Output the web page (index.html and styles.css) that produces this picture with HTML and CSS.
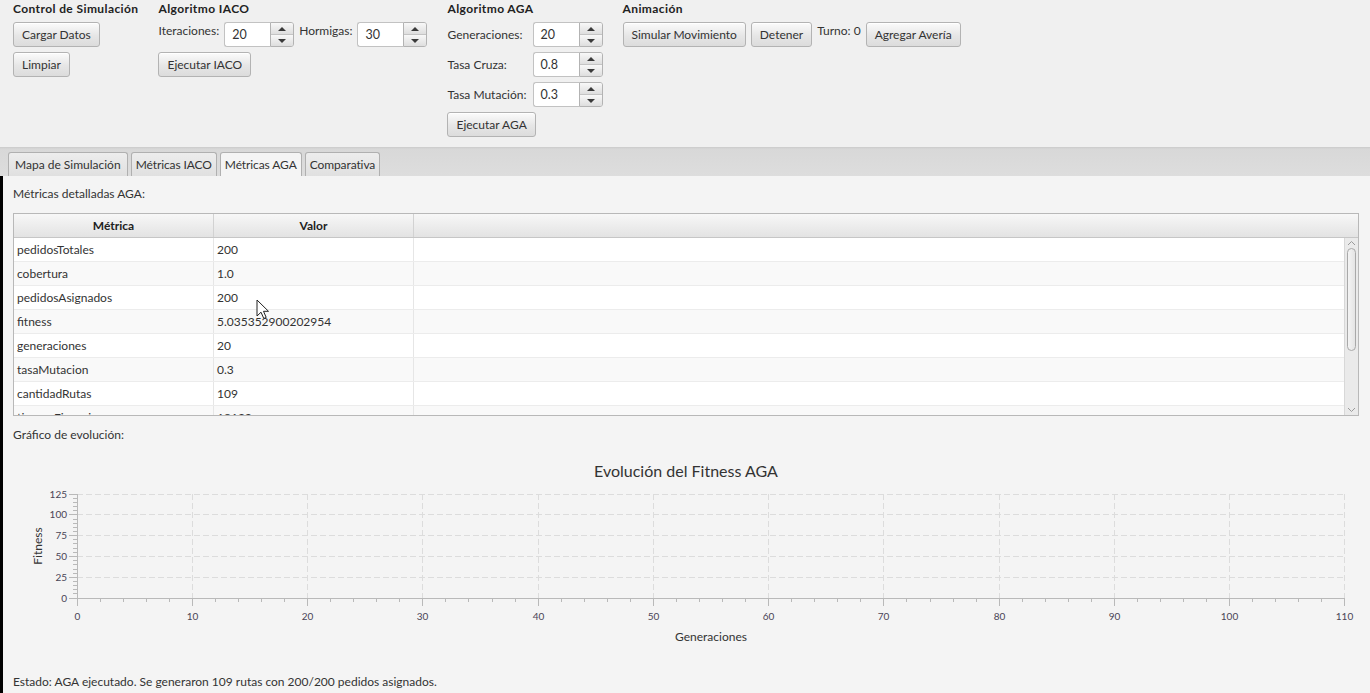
FILE: index.html
```html
<!DOCTYPE html>
<html lang="es">
<head>
<meta charset="utf-8">
<title>Simulación</title>
<link rel="stylesheet" href="styles.css">
</head>
<body>
<div class="app">
  <header class="toolbar">
    <section class="group">
      <div class="group-title">Control de Simulación</div>
      <button class="btn">Cargar Datos</button>
      <button class="btn">Limpiar</button>
    </section>
    <section class="group">
      <div class="group-title">Algoritmo IACO</div>
      <div class="param-row">
        <span class="lbl">Iteraciones:</span>
        <div class="spinner"><span class="spin-value">20</span><span class="spin-btns"><span class="spin-btn"><i class="tri-up"></i></span><span class="spin-btn"><i class="tri-down"></i></span></span></div>
        <span class="lbl">Hormigas:</span>
        <div class="spinner"><span class="spin-value">30</span><span class="spin-btns"><span class="spin-btn"><i class="tri-up"></i></span><span class="spin-btn"><i class="tri-down"></i></span></span></div>
      </div>
      <button class="btn">Ejecutar IACO</button>
    </section>
    <section class="group">
      <div class="group-title">Algoritmo AGA</div>
      <div class="param-grid">
        <span class="lbl">Generaciones:</span>
        <div class="spinner"><span class="spin-value">20</span><span class="spin-btns"><span class="spin-btn"><i class="tri-up"></i></span><span class="spin-btn"><i class="tri-down"></i></span></span></div>
        <span class="lbl">Tasa Cruza:</span>
        <div class="spinner"><span class="spin-value">0.8</span><span class="spin-btns"><span class="spin-btn"><i class="tri-up"></i></span><span class="spin-btn"><i class="tri-down"></i></span></span></div>
        <span class="lbl">Tasa Mutación:</span>
        <div class="spinner"><span class="spin-value">0.3</span><span class="spin-btns"><span class="spin-btn"><i class="tri-up"></i></span><span class="spin-btn"><i class="tri-down"></i></span></span></div>
      </div>
      <button class="btn">Ejecutar AGA</button>
    </section>
    <section class="group">
      <div class="group-title">Animación</div>
      <div class="param-row">
        <button class="btn">Simular Movimiento</button>
        <button class="btn">Detener</button>
        <span class="lbl">Turno: 0</span>
        <button class="btn">Agregar Avería</button>
      </div>
    </section>
  </header>

  <nav class="tabs">
    <div class="tab">Mapa de Simulación</div>
    <div class="tab tab-narrow">Métricas IACO</div>
    <div class="tab tab-active tab-narrow">Métricas AGA</div>
    <div class="tab tab-narrow">Comparativa</div>
  </nav>

  <div class="window-body">
    <main class="content">
      <div class="section-label">Métricas detalladas AGA:</div>
      <div class="table">
        <div class="thead">
          <div class="th col">Métrica</div>
          <div class="th col">Valor</div>
          <div class="th col-fill"></div>
        </div>
        <div class="tbody">
          <div class="rows">
            <div class="tr"><div class="td col">pedidosTotales</div><div class="td col">200</div><div class="td col-fill"></div></div>
            <div class="tr"><div class="td col">cobertura</div><div class="td col">1.0</div><div class="td col-fill"></div></div>
            <div class="tr"><div class="td col">pedidosAsignados</div><div class="td col">200</div><div class="td col-fill"></div></div>
            <div class="tr"><div class="td col">fitness</div><div class="td col">5.035352900202954</div><div class="td col-fill"></div></div>
            <div class="tr"><div class="td col">generaciones</div><div class="td col">20</div><div class="td col-fill"></div></div>
            <div class="tr"><div class="td col">tasaMutacion</div><div class="td col">0.3</div><div class="td col-fill"></div></div>
            <div class="tr"><div class="td col">cantidadRutas</div><div class="td col">109</div><div class="td col-fill"></div></div>
            <div class="tr"><div class="td col">tiempoEjecucion</div><div class="td col">18133</div><div class="td col-fill"></div></div>
          </div>
          <div class="vscroll">
            <svg class="arrow" width="13" height="10" viewBox="0 0 13 10"><polyline points="3,7 6.5,3.5 10,7" fill="none" stroke="#9a9a9a" stroke-width="1"/></svg>
            <div class="track"><div class="thumb"></div></div>
            <svg class="arrow" width="13" height="10" viewBox="0 0 13 10"><polyline points="3,3 6.5,6.5 10,3" fill="none" stroke="#9a9a9a" stroke-width="1"/></svg>
          </div>
        </div>
      </div>
      <div class="section-label chart-label">Gráfico de evolución:</div>
      <div class="chart">
        <div class="chart-title">Evolución del Fitness AGA</div>
        <svg class="plot" width="1346" height="170" viewBox="0 0 1346 170">
          <g stroke="#dcdcdc" stroke-width="1" stroke-dasharray="6 3" fill="none">
            <path d="M64 12.5H1332M64 32.5H1332M64 53.5H1332M64 74.5H1332M64 95.5H1332"/>
            <path d="M179.5 12V116M294.5 12V116M409.5 12V116M525.5 12V116M640.5 12V116M755.5 12V116M870.5 12V116M986.5 12V116M1101.5 12V116M1216.5 12V116M1331.5 12V116"/>
          </g>
          <g stroke="#b9b9b9" stroke-width="1" fill="none">
            <path d="M64.5 12V116.5M64 116.5H1332"/>
            <path d="M56 12.5H64M56 32.5H64M56 53.5H64M56 74.5H64M56 95.5H64M56 116.5H64"/>
            <path d="M60 111.5H64M60 107.5H64M60 103.5H64M60 99.5H64M60 91.5H64M60 87.5H64M60 82.5H64M60 78.5H64M60 70.5H64M60 66.5H64M60 61.5H64M60 57.5H64M60 49.5H64M60 45.5H64M60 41.5H64M60 37.5H64M60 28.5H64M60 24.5H64M60 20.5H64M60 16.5H64"/>
            <path d="M64.5 116V124M179.5 116V124M294.5 116V124M409.5 116V124M525.5 116V124M640.5 116V124M755.5 116V124M870.5 116V124M986.5 116V124M1101.5 116V124M1216.5 116V124M1331.5 116V124"/>
            <path d="M87.5 116v4M110.5 116v4M133.5 116v4M156.5 116v4M202.5 116v4M225.5 116v4M248.5 116v4M271.5 116v4M317.5 116v4M340.5 116v4M363.5 116v4M386.5 116v4M432.5 116v4M455.5 116v4M479.5 116v4M502.5 116v4M548.5 116v4M571.5 116v4M594.5 116v4M617.5 116v4M663.5 116v4M686.5 116v4M709.5 116v4M732.5 116v4M778.5 116v4M801.5 116v4M824.5 116v4M847.5 116v4M893.5 116v4M917.5 116v4M940.5 116v4M963.5 116v4M1009.5 116v4M1032.5 116v4M1055.5 116v4M1078.5 116v4M1124.5 116v4M1147.5 116v4M1170.5 116v4M1193.5 116v4M1239.5 116v4M1262.5 116v4M1285.5 116v4M1308.5 116v4"/>
          </g>
          <g class="tick-label" text-anchor="end">
            <text x="54" y="16">125</text>
            <text x="54" y="36">100</text>
            <text x="54" y="57">75</text>
            <text x="54" y="78">50</text>
            <text x="54" y="99">25</text>
            <text x="54" y="120">0</text>
          </g>
          <g class="tick-label" text-anchor="middle">
            <text x="64.5" y="138">0</text>
            <text x="179.5" y="138">10</text>
            <text x="294.5" y="138">20</text>
            <text x="409.5" y="138">30</text>
            <text x="525.5" y="138">40</text>
            <text x="640.5" y="138">50</text>
            <text x="755.5" y="138">60</text>
            <text x="870.5" y="138">70</text>
            <text x="986.5" y="138">80</text>
            <text x="1101.5" y="138">90</text>
            <text x="1216.5" y="138">100</text>
            <text x="1331.5" y="138">110</text>
          </g>
          <text class="axis-label" x="698" y="159" text-anchor="middle">Generaciones</text>
          <text class="axis-label" transform="translate(29 64) rotate(-90)" text-anchor="middle">Fitness</text>
        </svg>
      </div>
    </main>
    <footer class="status">Estado: AGA ejecutado. Se generaron 109 rutas con 200/200 pedidos asignados.</footer>
  </div>

  <svg class="cursor" width="14" height="22" viewBox="0 0 14 22">
    <path d="M1 1 L1 17 L5 13.2 L7.8 19.5 L10.2 18.4 L7.5 12.3 L12.5 12.3 Z" fill="#fff" stroke="#222" stroke-width="1" stroke-linejoin="round"/>
  </svg>
</div>
</body>
</html>
```

FILE: styles.css
```css
* { box-sizing: border-box; }

body {
  margin: 0;
  font-family: "Lato", "Liberation Sans", sans-serif;
  font-size: 12px;
  color: #333;
  background: #f4f4f4;
}

.app {
  position: relative;
  width: 1370px;
  height: 693px;
  display: flex;
  flex-direction: column;
  overflow: hidden;
  background: #f4f4f4;
}

/* ---------- toolbar ---------- */
.toolbar {
  height: 147px;
  flex: none;
  display: flex;
  gap: 20px;
  padding: 1px 10px 0 13px;
  background: #f0f0f0;
}

.group {
  display: flex;
  flex-direction: column;
  align-items: flex-start;
  gap: 5px;
}

.group-title {
  font-weight: bold;
  line-height: 16px;
  letter-spacing: 0.4px;
  color: #222;
}

.btn {
  font: inherit;
  color: #333;
  height: 25px;
  line-height: 15px;
  padding: 4px 8px;
  border: 1px solid #b3b3b3;
  border-radius: 3px;
  background: linear-gradient(to bottom, #fbfbfb 0%, #e6e6e6 55%, #dcdcdc 100%);
  box-shadow: inset 0 1px 0 #ffffff;
  white-space: nowrap;
  cursor: default;
}

.lbl {
  line-height: 17px;
  white-space: nowrap;
}

.param-row {
  display: flex;
  align-items: flex-start;
  gap: 5px;
}

.param-grid {
  display: grid;
  grid-template-columns: auto 70px;
  column-gap: 6px;
  row-gap: 5px;
  align-items: center;
}

.spinner {
  width: 70px;
  height: 25px;
  display: flex;
}

.spin-value {
  flex: 1;
  background: #fff;
  border: 1px solid #c2c2c2;
  border-right: none;
  border-radius: 3px 0 0 3px;
  padding: 0 7px;
  line-height: 23px;
  font-size: 12.5px;
}

.spin-btns {
  width: 24px;
  display: flex;
  flex-direction: column;
  border: 1px solid #b3b3b3;
  border-radius: 0 3px 3px 0;
  overflow: hidden;
}

.spin-btn {
  flex: 1;
  display: flex;
  align-items: center;
  justify-content: center;
  background: linear-gradient(to bottom, #f8f8f8, #dedede);
}

.spin-btn + .spin-btn {
  border-top: 1px solid #c4c4c4;
}

.tri-up {
  width: 0;
  height: 0;
  border-left: 4px solid transparent;
  border-right: 4px solid transparent;
  border-bottom: 4px solid #3a3a3a;
}

.tri-down {
  width: 0;
  height: 0;
  border-left: 4px solid transparent;
  border-right: 4px solid transparent;
  border-top: 4px solid #3a3a3a;
}

/* ---------- tabs ---------- */
.tabs {
  height: 29px;
  flex: none;
  display: flex;
  align-items: flex-end;
  gap: 3px;
  padding-left: 8px;
  background: linear-gradient(to bottom, #cbcbcb 0px, #d8d8d8 2px, #dddddd 100%);
}

.tab {
  height: 24px;
  line-height: 23px;
  padding: 0 6px;
  border: 1px solid #b0b0b0;
  border-bottom: none;
  border-radius: 3px 3px 0 0;
  background: linear-gradient(to bottom, #ededed, #e0e0e0);
  color: #333;
  white-space: nowrap;
}

.tab-narrow {
  padding: 0 4px;
  letter-spacing: -0.1px;
}

.tab-active {
  background: #f4f4f4;
}

/* ---------- body ---------- */
.window-body {
  flex: 1;
  display: flex;
  flex-direction: column;
  border-left: 3px solid #000;
  min-height: 0;
}

.content {
  flex: 1;
  padding: 10px 11px 0 10px;
  display: flex;
  flex-direction: column;
  min-height: 0;
}

.section-label {
  line-height: 16px;
}

.table {
  margin-top: 11px;
  height: 203px;
  flex: none;
  border: 1px solid #b8b8b8;
  background: #fff;
  display: flex;
  flex-direction: column;
}

.thead {
  height: 24px;
  flex: none;
  display: flex;
  background: linear-gradient(to bottom, #f7f7f7, #e3e3e3);
  border-bottom: 1px solid #c6c6c6;
}

.th {
  font-weight: bold;
  text-align: center;
  line-height: 24px;
  color: #222;
}

.col {
  width: 200px;
  flex: none;
  border-right: 1px solid #d2d2d2;
}

.col-fill {
  flex: 1;
}

.tbody {
  flex: 1;
  display: flex;
  min-height: 0;
}

.rows {
  flex: 1;
  overflow: hidden;
}

.tr {
  height: 24px;
  display: flex;
  border-bottom: 1px solid #ececec;
  background: #fff;
}

.tr:nth-child(even) {
  background: #f9f9f9;
}

.td {
  line-height: 23px;
  padding-left: 3px;
  white-space: nowrap;
}

.tr .col {
  border-right-color: #e6e6e6;
}

.vscroll {
  width: 14px;
  flex: none;
  display: flex;
  flex-direction: column;
  align-items: center;
  background: #eaeaea;
  border-left: 1px solid #d8d8d8;
}

.arrow {
  flex: none;
  display: block;
}

.track {
  flex: 1;
  width: 100%;
  padding: 0 2px;
}

.thumb {
  height: 103px;
  border: 1px solid #a9a9a9;
  border-radius: 5px;
  background: linear-gradient(to right, #f4f4f4, #e4e4e4);
}

.chart-label {
  margin-top: 11px;
}

.chart {
  display: flex;
  flex-direction: column;
}

.chart-title {
  margin-top: 17px;
  text-align: center;
  font-size: 16px;
  line-height: 22px;
  color: #333;
}

.plot {
  display: block;
}

.tick-label {
  font-family: "Lato", "Liberation Sans", sans-serif;
  font-size: 10px;
  fill: #4a4456;
}

.axis-label {
  font-family: "Lato", "Liberation Sans", sans-serif;
  font-size: 12px;
  fill: #333;
}

.status {
  height: 24px;
  flex: none;
  padding: 5px 0 0 10px;
  line-height: 16px;
}

.cursor {
  position: absolute;
  left: 256px;
  top: 299px;
}
```
